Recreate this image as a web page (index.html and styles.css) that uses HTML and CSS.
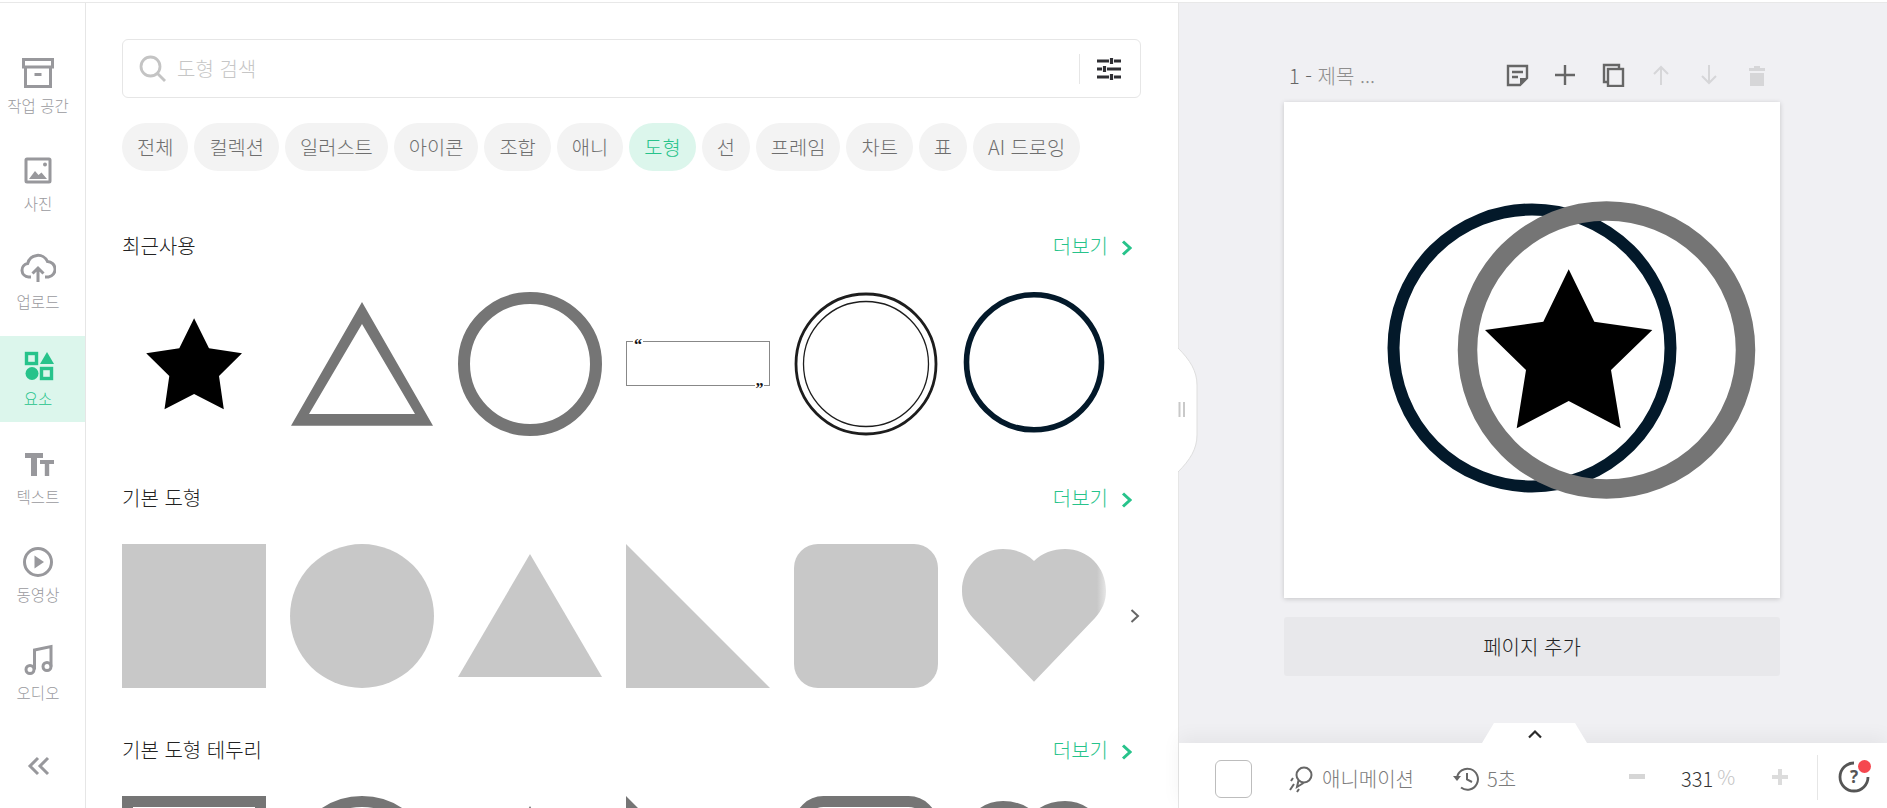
FILE: index.html
```html
<!DOCTYPE html>
<html lang="ko">
<head>
<meta charset="utf-8">
<title>도형</title>
<link rel="stylesheet" href="styles.css">
</head>
<body>
<div class="topline"></div>
<div class="app">
  <nav class="sidebar">
    <div class="nav-item">
      <svg class="nav-icon" width="36" height="36" viewBox="0 0 36 36"><path class="gs" d="M4.500 4.500H33.500V12H4.500ZM6.500 12V31.500H31.500V12" transform="translate(-1 0)"/><path class="gs" d="M14.500 19.500H21.500" stroke-width="2.500"/></svg>
      <span class="nav-label">작업 공간</span>
    </div>
    <div class="nav-item">
      <svg class="nav-icon" width="36" height="36" viewBox="0 0 36 36"><rect class="gs" x="6" y="6" width="24" height="23" rx="1"/><path class="gf" d="M9 26L15 18L18.500 22L21.500 19.500L27 26Z"/><circle class="gf" cx="25" cy="11.500" r="2"/></svg>
      <span class="nav-label">사진</span>
    </div>
    <div class="nav-item">
      <svg class="nav-icon" width="36" height="36" viewBox="0 0 36 36"><path class="gs" d="M11 26H8.500a6.800 6.800 0 0 1-.8-13.500A10.500 10.500 0 0 1 27.500 10.500a7.800 7.800 0 0 1 1 15.500H25"/><path class="gs" d="M18 31V17M12.500 22.500L18 17L23.500 22.500"/></svg>
      <span class="nav-label">업로드</span>
    </div>
    <div class="nav-item active">
      <svg class="nav-icon" width="36" height="36" viewBox="0 0 36 36"><rect class="grs" x="6.500" y="5.500" width="10" height="10"/><path class="grf" d="M20 16L27 4L34 16Z"/><circle class="grf" cx="12" cy="25.500" r="6.500"/><rect class="grs" x="21.500" y="20.500" width="10" height="10"/></svg>
      <span class="nav-label">요소</span>
    </div>
    <div class="nav-item">
      <svg class="nav-icon" width="36" height="36" viewBox="0 0 36 36"><rect class="gf" x="5" y="7" width="18" height="5"/><rect class="gf" x="11" y="7" width="6" height="23"/><rect class="gf" x="20" y="14" width="14" height="4"/><rect class="gf" x="24.800" y="14" width="4.400" height="16"/></svg>
      <span class="nav-label">텍스트</span>
    </div>
    <div class="nav-item">
      <svg class="nav-icon" width="36" height="36" viewBox="0 0 36 36"><circle class="gs" cx="18" cy="18" r="13.500"/><path class="gf" d="M14.500 11.500L24 18L14.500 24.500Z"/></svg>
      <span class="nav-label">동영상</span>
    </div>
    <div class="nav-item">
      <svg class="nav-icon" width="36" height="36" viewBox="0 0 36 36"><circle class="gs" cx="10" cy="27.500" r="4" stroke-width="2.600"/><circle class="gs" cx="27" cy="24.500" r="4" stroke-width="2.600"/><path class="gs" d="M14.500 27.500V8L31 4.500V24.500" stroke-width="2.600"/></svg>
      <span class="nav-label">오디오</span>
    </div>
    <svg class="collapse" width="24" height="22" viewBox="0 0 24 22"><path class="gs" d="M11 3L3 11L11 19M21 3L13 11L21 19" stroke-width="3.600"/></svg>
  </nav>

  <main class="panel">
    <div class="search">
      <svg class="search-icon" width="28" height="28" viewBox="0 0 28 28"><circle cx="11.500" cy="11.500" r="9.500"/><path d="M18.500 18.500L26 26"/></svg>
      <span class="placeholder">도형 검색</span>
      <span class="search-divider"></span>
      <svg class="filter-icon" width="24" height="22" viewBox="0 0 24 22"><path d="M0 3H12M17 3H24M0 11H5M10 11H24M0 19H12M17 19H24"/><path d="M14.500 0V6M7.500 8V14M14.500 16V22"/></svg>
    </div>
    <div class="chips">
      <span class="chip">전체</span><span class="chip">컬렉션</span><span class="chip">일러스트</span><span class="chip">아이콘</span><span class="chip">조합</span><span class="chip">애니</span><span class="chip on">도형</span><span class="chip">선</span><span class="chip">프레임</span><span class="chip">차트</span><span class="chip">표</span><span class="chip">AI 드로잉</span>
    </div>

    <section class="section">
      <div class="section-head">
        <h2 class="section-title">최근사용</h2>
        <a class="more">더보기<svg class="more-arrow" width="11" height="16" viewBox="0 0 11 16"><path d="M2 1.500L9 8L2 14.500"/></svg></a>
      </div>
      <div class="shape-row">
        <svg class="shape" viewBox="0 0 144 144"><polygon fill="#000" points="72.100,26.300 87,56.300 120,61.300 97,84 101.800,117.300 72.100,102 42.500,117.300 47.300,84 24.200,61.300 57.300,56.300"/></svg>
        <svg class="shape" viewBox="0 0 144 144"><path fill="#757575" fill-rule="evenodd" d="M72 10L143 133.700H1ZM72 32L19 122H125Z"/></svg>
        <svg class="shape" viewBox="0 0 144 144"><circle cx="72" cy="72" r="66" fill="none" stroke="#757575" stroke-width="12"/></svg>
        <svg class="shape" viewBox="0 0 144 144">
          <rect x=".5" y="49.500" width="143" height="44" fill="none" stroke="#888"/>
          <rect x="7" y="46" width="10" height="7" fill="#fff"/>
          <rect x="129" y="90" width="9" height="7" fill="#fff"/>
          <text class="quote" x="8" y="58">“</text>
          <text class="quote" x="129.500" y="102">”</text>
        </svg>
        <svg class="shape" viewBox="0 0 144 144"><circle cx="72" cy="72" r="70" fill="none" stroke="#1d1d1d" stroke-width="2.800"/><circle cx="72" cy="72" r="62.500" fill="none" stroke="#1d1d1d" stroke-width="1.300"/></svg>
        <svg class="shape" viewBox="0 0 144 144"><circle cx="72" cy="70.300" r="67.500" fill="none" stroke="#03192a" stroke-width="5.600"/></svg>
      </div>
    </section>

    <section class="section">
      <div class="section-head">
        <h2 class="section-title">기본 도형</h2>
        <a class="more">더보기<svg class="more-arrow" width="11" height="16" viewBox="0 0 11 16"><path d="M2 1.500L9 8L2 14.500"/></svg></a>
      </div>
      <div class="shape-row">
        <svg class="shape" viewBox="0 0 144 144"><rect width="144" height="144" fill="#c8c8c8"/></svg>
        <svg class="shape" viewBox="0 0 144 144"><circle cx="72" cy="72" r="72" fill="#c8c8c8"/></svg>
        <svg class="shape" viewBox="0 0 144 144"><polygon fill="#c8c8c8" points="72,10 144,133 0,133"/></svg>
        <svg class="shape" viewBox="0 0 144 144"><polygon fill="#c8c8c8" points="0,0 144,144 0,144"/></svg>
        <svg class="shape" viewBox="0 0 144 144"><rect width="144" height="144" rx="24" fill="#c8c8c8"/></svg>
        <svg class="shape" viewBox="0 0 144 144"><path fill="#c8c8c8" d="M72 137.700L11 74C4 66 0 58 0 47C0 23 18 5 41 5C53 5 64 9 72 17C80 9 91 5 103 5C126 5 144 23 144 47C144 58 140 66 133 74Z"/></svg>
        <div class="row-fade"><svg width="10" height="16" viewBox="0 0 10 16"><path d="M1.500 2L8 8L1.500 14"/></svg></div>
      </div>
    </section>

    <section class="section">
      <div class="section-head">
        <h2 class="section-title">기본 도형 테두리</h2>
        <a class="more">더보기<svg class="more-arrow" width="11" height="16" viewBox="0 0 11 16"><path d="M2 1.500L9 8L2 14.500"/></svg></a>
      </div>
      <div class="shape-row">
        <svg class="shape" viewBox="0 0 144 144"><rect x="5.500" y="5.500" width="133" height="133" fill="none" stroke="#757575" stroke-width="11"/></svg>
        <svg class="shape" viewBox="0 0 144 144"><circle cx="72" cy="72" r="66.500" fill="none" stroke="#757575" stroke-width="11"/></svg>
        <svg class="shape" viewBox="0 0 144 144"><path fill="#757575" fill-rule="evenodd" d="M72 10L143 133.700H1ZM72 32L19 122H125Z"/></svg>
        <svg class="shape" viewBox="0 0 144 144"><path fill="#757575" fill-rule="evenodd" d="M0 0L144 144H0ZM11 27V133H117Z"/></svg>
        <svg class="shape" viewBox="0 0 144 144"><rect x="5.500" y="5.500" width="133" height="133" rx="24" fill="none" stroke="#757575" stroke-width="11"/></svg>
        <svg class="shape" viewBox="0 0 144 144"><path fill="none" stroke="#757575" stroke-width="11" d="M72 130L15 70C8 63 5.500 56 5.500 47C5.500 27 21 10.500 41 10.500C53 10.500 64 15 72 24C80 15 91 10.500 103 10.500C123 10.500 138.500 27 138.500 47C138.500 56 136 63 129 70Z"/></svg>
      </div>
    </section>
  </main>

  <svg class="handle" width="20" height="126" viewBox="0 0 20 126"><path d="M0 1C12 13 19 24 19 38V88C19 102 12 113 0 125" fill="#fff" stroke="#dedede"/><path d="M1.500 55V70M6 55V70" stroke="#c9c9c9" stroke-width="2" fill="none"/></svg>

  <div class="stage">
    <div class="stage-main">
      <div class="page-head">
        <div class="page-title"><span class="page-num">1 -</span> 제목 ...</div>
        <div class="page-tools">
          <svg width="24" height="24" viewBox="0 0 24 24"><path class="ts" d="M3 3H22V15L15 22H3Z"/><path class="ts" d="M7 9H18M7 14H13"/><path class="tf" d="M15 22V15H22Z"/></svg>
          <svg width="24" height="24" viewBox="0 0 24 24"><path class="ts" d="M12 2V22M2 12H22" stroke-width="2"/></svg>
          <svg width="24" height="24" viewBox="0 0 24 24"><path class="ts" d="M7 19H3V2H18V6"/><rect class="ts" x="7" y="6" width="15" height="17"/></svg>
          <svg width="24" height="24" viewBox="0 0 24 24"><path class="ds" d="M12 22V4M5 11L12 4L19 11"/></svg>
          <svg width="24" height="24" viewBox="0 0 24 24"><path class="ds" d="M12 2V20M5 13L12 20L19 13"/></svg>
          <svg width="24" height="24" viewBox="0 0 24 24"><path class="df" d="M4 5H9V3H15V5H20V8H4ZM5 10H19V23H5Z"/></svg>
        </div>
      </div>
      <div class="canvas">
        <svg class="artwork" width="496" height="496" viewBox="0 0 496 496">
          <circle cx="248" cy="246" r="138.500" fill="none" stroke="#03192a" stroke-width="12"/>
          <circle cx="322.500" cy="248" r="139" fill="none" stroke="#757575" stroke-width="19.500"/>
          <polygon fill="#000" points="284.700,167.300 310.300,219.700 368.300,228 327,268 336.700,326.300 284.700,299 232.700,326.300 242,268 201,228 259.300,219.700"/>
        </svg>
      </div>
      <button class="add-page">페이지 추가</button>
    </div>
    <div class="bottom-bar">
      <div class="tab"><svg width="16" height="10" viewBox="0 0 16 10"><path d="M2 8.500L8 2.500L14 8.500"/></svg></div>
      <span class="swatch"></span>
      <div class="tool anim">
        <svg width="26" height="28" viewBox="0 0 26 28"><circle cx="16" cy="10" r="7.500" class="bs"/><path class="bs" d="M10.500 15.500L9 22L15.500 18M5 13L3 16M6 19L2 25M11 24L9 27"/></svg>
        <span>애니메이션</span>
      </div>
      <div class="tool hist">
        <svg width="26" height="28" viewBox="0 0 26 28"><path class="bs" d="M4 13A10.500 10.500 0 1 1 8 22.500"/><path class="bf" d="M0 11H8L4 16Z"/><path class="bs" d="M14 8V14.500L19 17"/></svg>
        <span>5초</span>
      </div>
      <svg class="zoom-minus" width="16" height="6" viewBox="0 0 16 6"><rect width="16" height="5" fill="#d6d6d6"/></svg>
      <span class="zoom-num">331</span><span class="zoom-unit">%</span>
      <svg class="zoom-plus" width="16" height="16" viewBox="0 0 16 16"><path d="M6 0H10V6H16V10H10V16H6V10H0V6H6Z" fill="#dcdcdc"/></svg>
      <span class="bar-divider"></span>
      <div class="help">
        <svg width="32" height="32" viewBox="0 0 32 32"><path class="hs" d="M16 2A14 14 0 1 0 30 16"/><text class="help-q" x="16" y="22">?</text></svg>
        <span class="help-dot"></span>
      </div>
    </div>
  </div>
</div>
</body>
</html>
```
FILE: styles.css
```css
* { box-sizing: border-box; }
html, body { margin: 0; height: 100%; overflow: hidden; background: #fff; }
body {
  display: flex;
  flex-direction: column;
  font-family: "Noto Sans CJK KR", "Noto Sans", sans-serif;
  font-weight: 300;
  color: #333;
}
svg { display: block; flex: none; }

.topline { height: 3px; flex: none; border-bottom: 1px solid #e8e8e8; }
.app { position: relative; display: flex; flex: 1; min-height: 0; }

/* sidebar */
.sidebar {
  width: 86px;
  flex: none;
  border-right: 1px solid #e6e6e6;
  padding-top: 40px;
  display: flex;
  flex-direction: column;
  gap: 11.800px;
}
.nav-item {
  height: 86px;
  flex: none;
  padding: 12px 9px 0 0;
  display: flex;
  flex-direction: column;
  align-items: center;
}
.nav-item.active { background: #dcf6ec; }
.nav-label {
  margin-top: 5px;
  font-size: 15.500px;
  line-height: 18px;
  color: #9a9a9e;
  white-space: nowrap;
}
.active .nav-label { color: #27c38b; }
.gs { fill: none; stroke: #98989c; stroke-width: 3; }
.gf { fill: #98989c; }
.grs { fill: none; stroke: #27c38b; stroke-width: 3.400; }
.grf { fill: #27c38b; }
.collapse { margin: 27px 0 0 27px; }

/* panel */
.panel {
  width: 1093px;
  flex: none;
  padding: 36px 0 0 36px;
  border-right: 1px solid #e6e6e6;
  overflow: hidden;
}
.search {
  width: 1019px;
  height: 59px;
  border: 1px solid #e6e6e6;
  border-radius: 6px;
  display: flex;
  align-items: center;
  padding-left: 16px;
}
.search-icon { fill: none; stroke: #c4c4c4; stroke-width: 2.800; }
.placeholder { margin-left: 10px; font-size: 20px; color: #c6c6c6; flex: 1; }
.search-divider { width: 1px; height: 30px; background: #e6e6e6; margin-right: 17px; }
.filter-icon { margin-right: 19px; fill: none; stroke: #2e2e33; stroke-width: 3.200; }

.chips { display: flex; gap: 6px; margin-top: 25px; margin-bottom: 63px; }
.chip {
  height: 48px;
  padding: 0 15px;
  border-radius: 24px;
  background: #f3f3f3;
  font-size: 19.800px;
  line-height: 47px;
  color: #6e6e6e;
  white-space: nowrap;
}
.chip.on { background: #dcf6ec; color: #27c38b; }

.section { margin-bottom: 50px; width: 1019px; }
.section-head {
  height: 24px;
  margin-bottom: 34px;
  padding-right: 9px;
  display: flex;
  justify-content: space-between;
  align-items: center;
}
.section-title { margin: 0; font-size: 20px; font-weight: 300; line-height: 24px; color: #222; }
.more { display: flex; align-items: center; gap: 13px; font-size: 20px; line-height: 24px; color: #27c38b; }
.more-arrow { fill: none; stroke: #27c38b; stroke-width: 3; margin-top: 3px; }

.shape-row { position: relative; display: grid; grid-template-columns: repeat(6, 144px); gap: 24px; height: 144px; }
.shape { width: 144px; height: 144px; }
.quote { font-family: "Liberation Serif", serif; font-size: 16px; font-weight: 700; fill: #111; }
.row-fade {
  position: absolute;
  right: 0;
  top: 0;
  width: 44px;
  height: 144px;
  background: linear-gradient(90deg, rgba(255,255,255,0), rgba(255,255,255,.6) 22%, #fff 40%);
  display: flex;
  align-items: center;
  justify-content: flex-end;
  padding-right: 1px;
}
.row-fade svg { fill: none; stroke: #666; stroke-width: 2; }
.handle { position: absolute; left: 1178px; top: 344px; z-index: 2; }

/* stage */
.stage {
  flex: 1;
  min-width: 0;
  display: flex;
  flex-direction: column;
  background: #f0f0f3;
}
.stage-main { flex: 1; min-height: 0; padding: 56px 0 0 105px; }
.page-head {
  width: 496px;
  height: 32px;
  margin-bottom: 11px;
  padding: 0 11px 0 5px;
  display: flex;
  justify-content: space-between;
  align-items: center;
}
.page-title { font-size: 20px; color: #8e8e8e; }
.page-num { color: #666; }
.page-tools { display: flex; gap: 24px; }
.ts { fill: none; stroke: #666; stroke-width: 2.400; }
.tf { fill: #666; }
.ds { fill: none; stroke: #d6d6d8; stroke-width: 2; }
.df { fill: #d6d6d8; }
.canvas { width: 496px; height: 496px; background: #fff; box-shadow: 0 1px 5px rgba(0,0,0,.18); }
.add-page {
  display: block;
  width: 496px;
  height: 59px;
  margin-top: 19px;
  border: 0;
  border-radius: 3px;
  background: #e8e8eb;
  font: inherit;
  font-size: 20px;
  color: #222;
}

.bottom-bar {
  position: relative;
  height: 65px;
  flex: none;
  background: #fff;
  padding: 6px 0 0 36px;
  display: flex;
  align-items: center;
  box-shadow: 0 -6px 18px rgba(0,0,0,.05);
  font-size: 20px;
  color: #7b7b7b;
}
.tab {
  position: absolute;
  left: 303px;
  top: -20px;
  width: 105px;
  height: 20px;
  background: #fff;
  clip-path: polygon(12px 0, 93px 0, 105px 100%, 0 100%);
  display: flex;
  justify-content: center;
  padding-top: 6px;
}
.tab svg { fill: none; stroke: #2a2a2a; stroke-width: 2.200; }
.swatch { width: 37px; height: 38px; border: 1px solid #bdbdbd; border-radius: 6px; }
.tool { display: flex; align-items: center; gap: 8px; white-space: nowrap; }
.anim { margin-left: 36px; }
.hist { margin-left: 39px; }
.bs { fill: none; stroke: #666; stroke-width: 2; }
.bf { fill: #666; }
.zoom-minus { margin: -4px 0 0 113px; }
.zoom-num { margin-left: 36px; color: #333; }
.zoom-unit { margin: -4px 0 0 4px; color: #c4c4c4; }
.zoom-plus { margin: -3px 0 0 37px; }
.bar-divider { width: 1px; height: 45px; background: #e6e6e6; margin: -3px 0 0 29px; }
.help { position: relative; margin: -4px 0 0 20px; }
.hs { fill: none; stroke: #555; stroke-width: 2.800; }
.help-q { font-size: 17px; font-weight: 700; fill: #555; text-anchor: middle; font-family: "Noto Sans", sans-serif; }
.help-dot {
  position: absolute;
  right: -1px;
  top: -1px;
  width: 13px;
  height: 13px;
  border-radius: 50%;
  background: #f5474f;
}
```
